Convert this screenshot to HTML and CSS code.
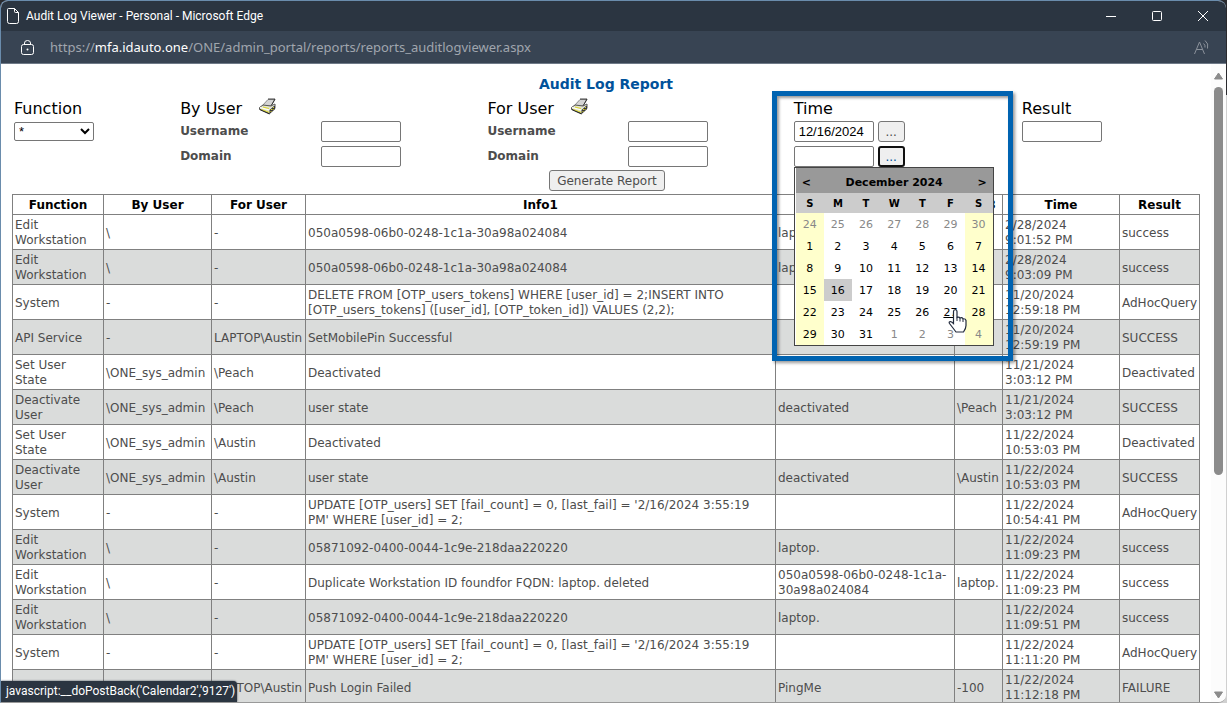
FILE: index.html
```html
<!DOCTYPE html>
<html lang="en">
<head>
<meta charset="utf-8">
<title>Audit Log Viewer</title>
<link rel="stylesheet" href="styles.css">
</head>
<body>
<svg class="defs" aria-hidden="true">
  <symbol id="scanner" viewBox="0 0 17 17">
    <path d="M3 8 9 1.500h7L12 8z" fill="#d4d4d4" stroke="#8a8a8a"/>
    <path d="M9 1h7" stroke="#444"/>
    <path d="M16 1 12 8" stroke="#333"/>
    <path d="M.5 9.500 4 7l8 1 4-2v4.500l-5.500 5L.5 11z" fill="#e4e4d0" stroke="#555"/>
    <path d="M1 9.500l9.500 2.500L16 7" fill="none" stroke="#fff"/>
    <path d="M2.500 11.500l8 3M4 9l6 1.500" stroke="#dcd82c"/>
    <path d="M10.500 12v4l5.500-5V7z" fill="#3a3a3a"/>
    <path d="M11.500 14l1-1M13.500 12l1-1M12 12l1-1M14 10l1-1" stroke="#dcd82c"/>
    <path d="M.5 11.500l10 4.500" stroke="#222"/>
  </symbol>
</svg>
<div class="window">
  <header class="titlebar">
    <svg class="page-icon" width="12" height="16" viewBox="0 0 12 16"><path d="M1.500.5h6l4 4v9a2 2 0 0 1-2 2h-7a2 2 0 0 1-2-2v-12a1 1 0 0 1 1-1zM7.500.5v3a1 1 0 0 0 1 1h3" fill="none" stroke="#fff"/></svg>
    <span class="window-title">Audit Log Viewer - Personal - Microsoft Edge</span>
    <div class="controls">
      <button type="button" aria-label="Minimize"><svg width="10" height="10"><path d="M0 5.500h10" stroke="#fff"/></svg></button>
      <button type="button" aria-label="Maximize"><svg width="10" height="10"><rect x=".5" y=".5" width="9" height="9" rx="1" fill="none" stroke="#fff"/></svg></button>
      <button type="button" aria-label="Close"><svg width="10" height="10"><path d="M0 0l10 10M10 0L0 10" stroke="#fff"/></svg></button>
    </div>
  </header>
  <div class="addressbar">
    <svg width="13" height="15" viewBox="0 0 13 15"><rect x=".5" y="4.500" width="12" height="10" rx="2" fill="none" stroke="#fff"/><path d="M3.500 4.500V3a3 2.500 0 0 1 6 0v1.500" fill="none" stroke="#fff"/><circle cx="6.500" cy="9.500" r="1" fill="#fff"/></svg>
    <span class="url">https://<b>mfa.idauto.one</b>/ONE/admin_portal/reports/reports_auditlogviewer.aspx</span>
    <svg class="read" width="16" height="15" viewBox="0 0 16 15" fill="none" stroke="#8b929b"><path d="M.5 14 5.500 2l5 12M2.500 9.500h6M9.500 3.500q2 1.500 1.500 4M11 .5q4 3 2.500 8"/></svg>
  </div>
  <div class="viewport">
    <main>
      <h1>Audit Log Report</h1>
      <form class="filters">
        <section>
          <h2><label for="fn">Function</label></h2>
          <select id="fn"><option>*</option></select>
        </section>
        <section>
          <h2>By User <svg class="scan"><use href="#scanner"/></svg></h2>
          <div class="field"><label for="bu">Username</label><input id="bu" type="text"></div>
          <div class="field"><label for="bd">Domain</label><input id="bd" type="text"></div>
        </section>
        <section>
          <h2>For User <svg class="scan"><use href="#scanner"/></svg></h2>
          <div class="field"><label for="fu">Username</label><input id="fu" type="text"></div>
          <div class="field"><label for="fd">Domain</label><input id="fd" type="text"></div>
        </section>
        <section class="time">
          <h2>Time</h2>
          <div class="date"><input type="text" aria-label="From date" value="12/16/2024"><button type="button">...</button></div>
          <div class="date"><input type="text" aria-label="To date"><button type="button" class="focused">...</button></div>
          <div class="calendar">
            <div class="month"><a href="#">&lt;</a><span>December 2024</span><a href="#">&gt;</a></div>
            <table class="days">
              <thead><tr><th>S</th><th>M</th><th>T</th><th>W</th><th>T</th><th>F</th><th>S</th></tr></thead>
              <tbody>
                <tr class="out"><td>24</td><td>25</td><td>26</td><td>27</td><td>28</td><td>29</td><td>30</td></tr>
                <tr><td>1</td><td>2</td><td>3</td><td>4</td><td>5</td><td>6</td><td>7</td></tr>
                <tr><td>8</td><td>9</td><td>10</td><td>11</td><td>12</td><td>13</td><td>14</td></tr>
                <tr><td>15</td><td class="today">16</td><td>17</td><td>18</td><td>19</td><td>20</td><td>21</td></tr>
                <tr><td>22</td><td>23</td><td>24</td><td>25</td><td>26</td><td><a class="hover" href="#">27</a></td><td>28</td></tr>
                <tr><td>29</td><td>30</td><td>31</td><td class="off">1</td><td class="off">2</td><td class="off">3</td><td class="off">4</td></tr>
              </tbody>
            </table>
          </div>
          <div class="highlight"></div>
          <svg class="cursor" width="19" height="24" viewBox="0 0 19 24"><path d="M5.500 14.500V2.500a1.500 1.500 0 0 1 3.500 0v6q2-1 3 .5 2-.8 3 .8 2.500-.3 3 1.700v5q0 3-2.500 6.500H8Q5 19 1.500 14.500q-1-2 1-2 1.500.5 3 2z" fill="#fff" stroke="#222a3c" stroke-width="1.200"/><path d="M9 8.500V12M12 9v3.500M15 10v3" stroke="#222a3c"/></svg>
        </section>
        <section>
          <h2><label for="res">Result</label></h2>
          <input id="res" type="text">
        </section>
        <button type="button" class="generate">Generate Report</button>
      </form>
      <table class="log">
        <colgroup><col class="c-fn"><col class="c-by"><col class="c-for"><col><col class="c-i2"><col class="c-i3"><col class="c-time"><col class="c-res"></colgroup>
        <thead><tr><th>Function</th><th>By User</th><th>For User</th><th>Info1</th><th>Info2</th><th>Info3</th><th>Time</th><th>Result</th></tr></thead>
        <tbody>
          <tr><td>Edit Workstation</td><td>\</td><td>-</td><td>050a0598-06b0-0248-1c1a-30a98a024084</td><td>laptop.</td><td></td><td>2/28/2024<br>9:01:52 PM</td><td>success</td></tr>
          <tr><td>Edit Workstation</td><td>\</td><td>-</td><td>050a0598-06b0-0248-1c1a-30a98a024084</td><td>laptop.</td><td></td><td>2/28/2024<br>9:03:09 PM</td><td>success</td></tr>
          <tr><td>System</td><td>-</td><td>-</td><td>DELETE FROM [OTP_users_tokens] WHERE [user_id] = 2;INSERT INTO [OTP_users_tokens] ([user_id], [OTP_token_id]) VALUES (2,2);</td><td></td><td></td><td>11/20/2024<br>12:59:18 PM</td><td>AdHocQuery</td></tr>
          <tr><td>API Service</td><td>-</td><td>LAPTOP\Austin</td><td>SetMobilePin Successful</td><td></td><td></td><td>11/20/2024<br>12:59:19 PM</td><td>SUCCESS</td></tr>
          <tr><td>Set User State</td><td>\ONE_sys_admin</td><td>\Peach</td><td>Deactivated</td><td></td><td></td><td>11/21/2024<br>3:03:12 PM</td><td>Deactivated</td></tr>
          <tr><td>Deactivate User</td><td>\ONE_sys_admin</td><td>\Peach</td><td>user state</td><td>deactivated</td><td>\Peach</td><td>11/21/2024<br>3:03:12 PM</td><td>SUCCESS</td></tr>
          <tr><td>Set User State</td><td>\ONE_sys_admin</td><td>\Austin</td><td>Deactivated</td><td></td><td></td><td>11/22/2024<br>10:53:03 PM</td><td>Deactivated</td></tr>
          <tr><td>Deactivate User</td><td>\ONE_sys_admin</td><td>\Austin</td><td>user state</td><td>deactivated</td><td>\Austin</td><td>11/22/2024<br>10:53:03 PM</td><td>SUCCESS</td></tr>
          <tr><td>System</td><td>-</td><td>-</td><td>UPDATE [OTP_users] SET [fail_count] = 0, [last_fail] = '2/16/2024 3:55:19 PM' WHERE [user_id] = 2;</td><td></td><td></td><td>11/22/2024<br>10:54:41 PM</td><td>AdHocQuery</td></tr>
          <tr><td>Edit Workstation</td><td>\</td><td>-</td><td>05871092-0400-0044-1c9e-218daa220220</td><td>laptop.</td><td></td><td>11/22/2024<br>11:09:23 PM</td><td>success</td></tr>
          <tr><td>Edit Workstation</td><td>\</td><td>-</td><td>Duplicate Workstation ID foundfor FQDN: laptop. deleted</td><td>050a0598-06b0-0248-1c1a-30a98a024084</td><td>laptop.</td><td>11/22/2024<br>11:09:23 PM</td><td>success</td></tr>
          <tr><td>Edit Workstation</td><td>\</td><td>-</td><td>05871092-0400-0044-1c9e-218daa220220</td><td>laptop.</td><td></td><td>11/22/2024<br>11:09:51 PM</td><td>success</td></tr>
          <tr><td>System</td><td>-</td><td>-</td><td>UPDATE [OTP_users] SET [fail_count] = 0, [last_fail] = '2/16/2024 3:55:19 PM' WHERE [user_id] = 2;</td><td></td><td></td><td>11/22/2024<br>11:11:20 PM</td><td>AdHocQuery</td></tr>
          <tr><td></td><td></td><td>LAPTOP\Austin</td><td>Push Login Failed</td><td>PingMe</td><td>-100</td><td>11/22/2024<br>11:12:18 PM</td><td>FAILURE</td></tr>
        </tbody>
      </table>
    </main>
    <div class="scrollbar">
      <svg width="9" height="8"><path d="M4.500 1 8.500 7h-8z" fill="#8b8b8b" stroke="#8b8b8b" stroke-linejoin="round"/></svg>
      <div class="track"><div class="thumb"></div></div>
      <svg width="9" height="8"><path d="M4.500 7 8.500 1h-8z" fill="#8b8b8b" stroke="#8b8b8b" stroke-linejoin="round"/></svg>
    </div>
  </div>
  <div class="status">javascript:__doPostBack('Calendar2','9127')</div>
</div>
</body>
</html>
```
FILE: styles.css
```css
* { box-sizing: border-box; }
body {
  margin: 0;
  font: 12px/15px "DejaVu Sans", Verdana, sans-serif;
  color: #4d4d4d;
  background: linear-gradient(#2a2a2e 95px, #d0d0d0 95px);
}
.defs { display: none; }
.window {
  position: relative;
  display: flex;
  flex-direction: column;
  height: 100vh;
  margin-right: 1px;
  border: 1px solid #6a8cac;
  border-bottom-color: #999;
  border-right: 0;
  border-radius: 8px 8px 8px 0;
  overflow: hidden;
  background: #fff;
}
.titlebar, .addressbar {
  display: flex;
  align-items: center;
  flex: none;
  color: #fff;
}
.titlebar { height: 30px; padding-left: 6px; background: #2b3541; }
.window-title { margin-left: 7px; font: 12px/16px Roboto, sans-serif; }
.controls { display: flex; margin-left: auto; }
.controls button {
  display: flex;
  justify-content: center;
  width: 46px;
  padding: 0;
  border: 0;
  background: none;
}
.addressbar {
  height: 33px;
  padding: 0 16px 0 20px;
  border-bottom: 1px solid #6f7a88;
  background: #384453;
}
.url { margin-left: 16px; font: 13px/20px "Noto Sans", sans-serif; color: #a0a6ae; }
.url b { font-weight: 400; color: #fff; }
.read { margin-left: auto; }
.viewport { display: flex; flex: 1; min-height: 0; }
main { flex: 1; min-width: 0; padding: 12px 11px 0; }
h1 { margin: 0; font-size: 14px; line-height: 16px; text-align: center; color: #00529b; }
.filters {
  display: grid;
  grid-template-columns: 166fr 307fr 306fr 228fr 178fr;
  margin: 6px 0 3px;
  padding-left: 2px;
}
h2 {
  display: flex;
  gap: 17px;
  align-items: center;
  height: 21px;
  margin: 0 0 2px;
  font-size: 16px;
  font-weight: 400;
  color: #000;
}
.scan { width: 17px; height: 17px; margin-bottom: 4px; }
.field, .date { display: flex; align-items: center; height: 21px; margin-bottom: 4px; }
.field label { width: 46%; font-weight: 700; }
input, select {
  width: 80px;
  height: 21px;
  padding: 1px 4px;
  border: 1px solid #767676;
  border-radius: 2px;
  background: #fff;
  color: #000;
  font: 13px/15px "Liberation Sans", Arial, sans-serif;
}
select {
  height: 19px;
  padding: 0;
}
.filters > section:first-child select { margin-top: 1px; }
.date { gap: 4px; }
button { font: inherit; color: inherit; }
.date button, .generate {
  height: 21px;
  padding: 1px 0 0;
  border: 1px solid #767676;
  border-radius: 3px;
  background: #efefef;
}
.date button { width: 27px; }
.date .focused { border: 2px solid #101010; color: #00529b; }
.generate { grid-column: 1 / -1; justify-self: center; width: 116px; margin-top: -1px; }
.time { position: relative; }
.calendar {
  position: absolute;
  z-index: 1;
  top: 69px;
  left: 0;
  width: 200px;
  padding-left: 1px;
  border: 1px solid #444;
  background: #fff;
  color: #000;
  font-size: 11px;
}
.month {
  display: flex;
  align-items: center;
  justify-content: space-between;
  height: 25px;
  padding: 3px 6px 0;
  background: #999;
  font-weight: 700;
}
.calendar a { color: #000; text-decoration: none; }
.calendar .hover { text-decoration: underline; }
.days { width: 100%; table-layout: fixed; border-collapse: collapse; text-align: center; }
.days th { height: 20px; padding: 1px 0 0; background: #ccc; font-size: 10px; }
.days td { height: 22px; padding: 0; }
.days td:first-child, .days td:last-child { background: #ffffcc; }
.days .out td, .days .off { color: #888; }
.days .today { background: #ccc; }
.highlight {
  position: absolute;
  z-index: 2;
  top: -7px;
  left: -22px;
  width: 241px;
  height: 270px;
  border: 5px solid #0063b1;
  box-shadow: 2px 2px 3px rgba(0, 0, 0, .4), inset 2px 2px 3px rgba(0, 0, 0, .4);
}
.cursor { position: absolute; z-index: 3; top: 211px; left: 154px; }
.log { width: 100%; table-layout: fixed; border-collapse: collapse; }
.log th, .log td { padding: 3px 2px 1px; border: 1px solid #808080; }
.log td { height: 35px; }
.log th { color: #000; }
.log tbody tr:nth-child(even) { background: #dadcdb; }
.c-fn { width: 91px; }
.c-by { width: 108px; }
.c-for { width: 94px; }
.c-i2 { width: 179px; }
.c-i3 { width: 48px; }
.c-time { width: 117px; }
.c-res { width: 80px; }
.scrollbar {
  display: flex;
  flex: none;
  flex-direction: column;
  align-items: center;
  width: 15px;
  padding: 8px 0 3px;
  background: #fcfcfc;
}
.track { flex: 1; padding: 7px 0; }
.thumb { width: 9px; height: 65%; border-radius: 5px; background: #8b8b8b; }
.status {
  position: absolute;
  z-index: 4;
  bottom: 0;
  left: 0;
  padding: 2px 2px 3px 5px;
  border-radius: 0 4px 0 0;
  background: #2b3541;
  color: #fff;
  font: 12px/16px Roboto, sans-serif;
  box-shadow: 0 0 2px #2b3541;
}
```
